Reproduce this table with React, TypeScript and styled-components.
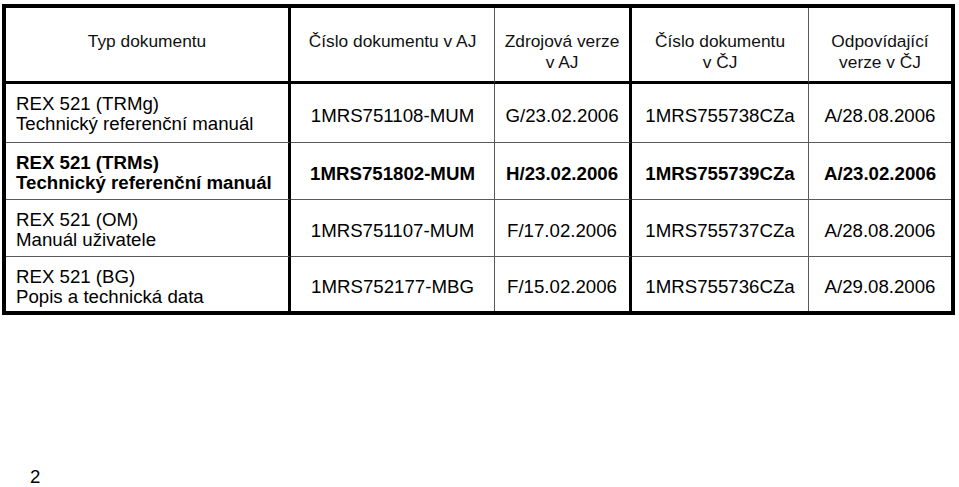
import * as React from 'react'
import styled, { createGlobalStyle } from 'styled-components'

const GlobalStyle = createGlobalStyle`
  html, body {
    margin: 0;
    padding: 0;
    background: #fff;
  }
  body {
    font-family: 'Liberation Sans', Arial, sans-serif;
    color: #000;
  }
`

const Page = styled.div`
  width: 959px;
  height: 487px;
  overflow: hidden;
  padding: 4px 0 0 2px;
  box-sizing: border-box;
`

const Table = styled.div`
  display: grid;
  grid-template-columns: 285px 204px 137px 177px 142px;
  grid-template-rows: 76px 59px 57px 57px 54px;
  width: 953px;
  box-sizing: border-box;
  border: 4px solid #000;
`

interface CellProps {
  $thick?: boolean
  $last?: boolean
  $lastRow?: boolean
  $bold?: boolean
}

const BaseCell = styled.div<CellProps>`
  box-sizing: border-box;
  border-right: ${p => (p.$last ? 'none' : p.$thick ? '3px solid #000' : '1px solid #5a5a5a')};
  border-bottom: ${p => (p.$lastRow ? 'none' : '1px solid #5a5a5a')};
  font-weight: ${p => (p.$bold ? 700 : 400)};
  white-space: nowrap;
`

const HeaderCell = styled(BaseCell)`
  border-bottom: 3px solid #000;
  padding: 23px 4px 0;
  text-align: center;
  font-size: 17.33px;
  line-height: 21px;
  color: #111;
`

const TypeCell = styled(BaseCell)`
  padding: 10px 4px 0 10px;
  font-size: 18.67px;
  line-height: 20px;
`

const ValueCell = styled(BaseCell)`
  display: flex;
  align-items: center;
  justify-content: center;
  padding: 5px 4px 0;
  font-size: 18.67px;
  line-height: 20px;
`

const PageNumber = styled.div`
  margin-top: 151px;
  padding-left: 28px;
  font-size: 18.67px;
  line-height: 21px;
`

const headers = [
  ['Typ dokumentu'],
  ['Číslo dokumentu v AJ'],
  ['Zdrojová verze', 'v AJ'],
  ['Číslo dokumentu', 'v ČJ'],
  ['Odpovídající', 'verze v ČJ'],
]

interface Row {
  type: [string, string]
  docEn: string
  verEn: string
  docCz: string
  verCz: string
  bold?: boolean
}

const rows: Row[] = [
  { type: ['REX 521 (TRMg)', 'Technický referenční manuál'], docEn: '1MRS751108-MUM', verEn: 'G/23.02.2006', docCz: '1MRS755738CZa', verCz: 'A/28.08.2006' },
  { type: ['REX 521 (TRMs)', 'Technický referenční manuál'], docEn: '1MRS751802-MUM', verEn: 'H/23.02.2006', docCz: '1MRS755739CZa', verCz: 'A/23.02.2006', bold: true },
  { type: ['REX 521 (OM)', 'Manuál uživatele'], docEn: '1MRS751107-MUM', verEn: 'F/17.02.2006', docCz: '1MRS755737CZa', verCz: 'A/28.08.2006' },
  { type: ['REX 521 (BG)', 'Popis a technická data'], docEn: '1MRS752177-MBG', verEn: 'F/15.02.2006', docCz: '1MRS755736CZa', verCz: 'A/29.08.2006' },
]

// thick dividers after the 1st and 3rd column
const thickCol = [true, false, true, false, false]

export default function App() {
  return (
    <Page>
      <GlobalStyle />
      <Table>
        {headers.map((lines, i) => (
          <HeaderCell key={'h' + i} $thick={thickCol[i]} $last={i === 4}>
            {lines.map((l, j) => (
              <div key={j}>{l}</div>
            ))}
          </HeaderCell>
        ))}
        {rows.map((r, ri) => {
          const lastRow = ri === rows.length - 1
          const values = [r.docEn, r.verEn, r.docCz, r.verCz]
          return (
            <React.Fragment key={ri}>
              <TypeCell $thick $bold={r.bold} $lastRow={lastRow}>
                <div>{r.type[0]}</div>
                <div>{r.type[1]}</div>
              </TypeCell>
              {values.map((v, ci) => (
                <ValueCell
                  key={ci}
                  $bold={r.bold}
                  $thick={thickCol[ci + 1]}
                  $last={ci === 3}
                  $lastRow={lastRow}
                >
                  {v}
                </ValueCell>
              ))}
            </React.Fragment>
          )
        })}
      </Table>
      <PageNumber>2</PageNumber>
    </Page>
  )
}
